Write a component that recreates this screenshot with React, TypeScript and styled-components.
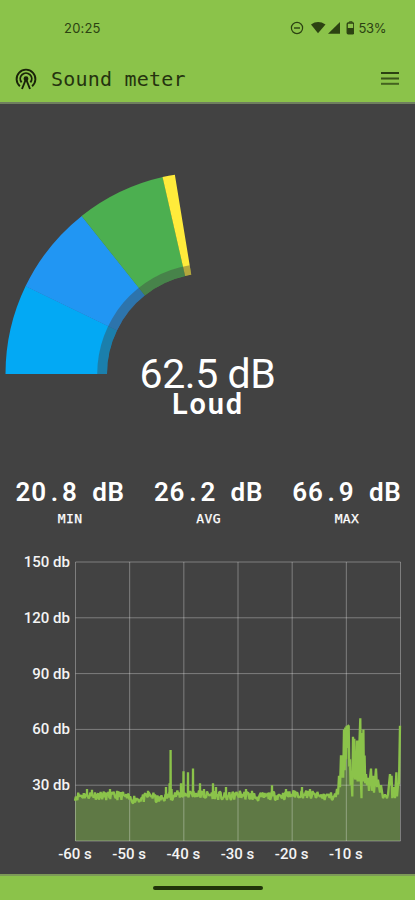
import React from "react";
import styled, { createGlobalStyle } from "styled-components";

const GREEN = "#8bc34a";
const PANEL = "#424242";
const INK = "#2c4212";

const GlobalStyle = createGlobalStyle`
  * { box-sizing: border-box; }
  body { margin: 0; background: ${PANEL}; font-family: Roboto, sans-serif; }
`;

const Screen = styled.div`
  width: 415px;
  height: 900px;
  display: flex;
  flex-direction: column;
  background: ${PANEL};
  color: #fff;
  overflow: hidden;
`;

const Header = styled.header`
  height: 104px;
  flex: none;
  background: ${GREEN};
  border-bottom: 2px solid #6f7f5f;
  color: ${INK};
`;

const StatusBar = styled.div`
  height: 55px;
  padding: 0 29px 0 64px;
  display: flex;
  align-items: center;
  justify-content: space-between;
  font: 400 13px Inter, sans-serif;
  letter-spacing: 0.2px;
`;

const StatusIcons = styled.div`
  display: flex;
  align-items: center;
`;

const Percent = styled.span`
  margin-left: 5px;
  letter-spacing: -0.4px;
`;

const AppBar = styled.div`
  height: 47px;
  padding: 0 15px 0 15px;
  display: flex;
  align-items: center;
`;

const AppTitle = styled.h1`
  margin: 0 0 0 14px;
  flex: 1;
  font: 400 20px "DejaVu Sans Mono", monospace;
  letter-spacing: 0.2px;
  color: #25330f;
`;

const Gauge = styled.section`
  height: 344px;
  flex: none;
  display: flex;
  flex-direction: column;
  align-items: center;
`;

const GaugeArc = styled.svg`
  display: block;
  flex: none;
`;

const Level = styled.div`
  margin-top: -24px;
  font-size: 41px;
  line-height: 48px;
  letter-spacing: -0.4px;
`;

const Loudness = styled.div`
  margin-top: -9px;
  padding-left: 1px;
  font: 600 29px/30px Roboto, sans-serif;
  letter-spacing: 1.9px;
`;

const Stats = styled.section`
  height: 98px;
  flex: none;
  padding: 29px 0 0 1px;
  display: grid;
  grid-template-columns: repeat(3, 138.4px);
`;

const Stat = styled.div`
  text-align: center;
  white-space: nowrap;
`;

const StatValue = styled.div`
  font: 600 26px/30px Roboto, sans-serif;
  letter-spacing: 0.8px;
  word-spacing: 7.2px;
`;

const DecimalPoint = styled.span`
  padding: 0 3px 0 4px;
`;

const StatLabel = styled.div`
  margin-top: 5px;
  font: 400 13px/14px "DejaVu Sans Mono", monospace;
  letter-spacing: 0.4px;
  -webkit-text-stroke: 0.25px #fff;
`;

const Chart = styled.svg`
  display: block;
  flex: none;
  font: 500 15px Roboto, sans-serif;
`;

const NavBar = styled.footer`
  height: 26px;
  flex: none;
  display: flex;
  justify-content: center;
  align-items: center;
  background: ${GREEN};
  border-top: 2px solid #7d9a58;
`;

const NavHandle = styled.div`
  width: 110px;
  height: 4px;
  border-radius: 2px;
  background: #20340a;
`;

const CX = 207.5;
const CY = 200;

function ring(from: number, to: number, inner: number, outer: number) {
  const at = (deg: number, r: number) => {
    const a = (deg * Math.PI) / 180;
    return `${(CX - r * Math.cos(a)).toFixed(2)} ${(CY - r * Math.sin(a)).toFixed(2)}`;
  };
  return `M${at(from, outer)}A${outer} ${outer} 0 0 1 ${at(to, outer)}L${at(to, inner)}A${inner} ${inner} 0 0 0 ${at(from, inner)}Z`;
}

const bands = [
  { from: 0, to: 25.8, color: "#03a9f4" },
  { from: 25.71, to: 51.5, color: "#2196f3" },
  { from: 51.43, to: 77.2, color: "#4caf50" },
  { from: 77.14, to: 80.7, color: "#ffeb3b" },
];

const stats = [
  { whole: "20", tenths: "8 dB", label: "MIN" },
  { whole: "26", tenths: "2 dB", label: "AVG" },
  { whole: "66", tenths: "9 dB", label: "MAX" },
];

/* Chart coordinates: one unit is one pixel. */
const LEFT = 75.5;
const RIGHT = 400.5;
const TOP = 14.5;
const BOTTOM = 293.5;
const ROW = (BOTTOM - TOP) / 5;
const COL = (RIGHT - LEFT) / 6;

const quiet: [number, number][] = [
  [75, 24], [88, 25], [100, 24.5], [112, 24], [122, 24.5], [130, 22.5], [145, 23],
  [150, 25], [158, 22], [167, 24], [180, 25], [195, 25.5], [205, 24.5], [214, 25],
  [226, 23.5], [240, 25], [260, 23.5], [272, 24.5], [285, 24.5], [300, 25.5], [320, 24], [336, 24],
];

const peaks: [number, number][] = [
  [87, 28], [92, 27.5], [110, 28], [117, 27], [148, 27], [166, 29], [169.6, 31], [170.6, 49], [171.6, 28],
  [181, 31], [183.5, 37.5], [188, 37], [193, 39], [200, 31], [204, 28], [213, 31],
  [216, 29], [226, 29], [246, 28], [252, 27], [261, 26], [272, 30], [286, 28], [295, 27], [302, 29], [310, 28],
];

const loud: [number, number][] = [
  [337, 28], [338, 25], [339, 35], [340, 29], [341, 46], [341.7, 34], [342.5, 46], [343.2, 34], [344, 60], [344.7, 38],
  [345.3, 61], [346, 44], [346.6, 62], [347.4, 50], [348, 62], [348.7, 62], [349.3, 40], [350, 44], [350.6, 30], [351.4, 34], [352.3, 24],
  [353, 56], [353.7, 34], [354.3, 55], [355, 33], [355.6, 45], [356.3, 33], [357, 54], [357.6, 32], [358.3, 54],
  [359, 32], [359.5, 54], [360.3, 66], [361, 31], [361.5, 23], [362, 58], [362.7, 32], [363.4, 60], [364, 32],
  [364.6, 46], [365.2, 31], [366, 36], [367, 30], [368, 34], [369, 27], [370, 34], [371, 39], [372, 27], [373, 35],
  [374, 26], [376, 39], [377, 29], [378, 33], [380, 26], [381, 30], [383, 23], [385, 25], [387, 23], [388, 25],
  [390, 36], [391, 30], [391.6, 35], [392.3, 23], [394, 29], [395, 23], [396.4, 37], [397, 24], [398, 30], [399, 31], [400, 62],
];

function interpolate(points: [number, number][], x: number) {
  const i = points.findIndex((p) => p[0] >= x);
  if (i <= 0) return points[Math.max(i, 0)][1];
  const [x0, y0] = points[i - 1];
  const [x1, y1] = points[i];
  return y0 + ((x - x0) / (x1 - x0)) * (y1 - y0);
}

function buildSamples() {
  const out: [number, number][] = [];
  let seed = 11;
  for (let x = 75; x < 336; x += 0.8) {
    seed = (seed * 16807) % 2147483647;
    out.push([x, interpolate(quiet, x) + (seed / 2147483647 - 0.5) * 4.8]);
  }
  peaks.forEach(([x, db]) => {
    out.push([x - 0.15, 24], [x, db], [x + 0.15, 24]);
  });
  out.sort((a, b) => a[0] - b[0]);
  return out.concat(loud);
}

const toY = (db: number) => BOTTOM - (db / 30) * ROW;
const trace = buildSamples().map(([x, db]) => `${x.toFixed(2)},${toY(db).toFixed(1)}`);
const area = [`75,${BOTTOM}`, ...trace, `400,${BOTTOM}`].join(" ");

function AntennaIcon() {
  return (
    <svg width="22" height="22" viewBox="0 0 22 22" fill="none" stroke="#192309" strokeWidth="1.9">
      <path d="M4.9 18.2A9.4 9.4 0 1 1 17.1 18.2" />
      <path d="M6.6 14.4A5.7 5.7 0 1 1 15.4 14.4" />
      <path d="M7 21L11 11L15 21" />
      <circle cx="11" cy="10.7" r="1.5" fill="#192309" />
    </svg>
  );
}

function MenuIcon() {
  return (
    <svg width="20" height="16" viewBox="0 0 20 16" fill={INK}>
      <rect x="1" y="1" width="18" height="2" />
      <rect x="1" y="6.5" width="18" height="2" fillOpacity="0.85" />
      <rect x="1" y="11.8" width="18" height="2" fillOpacity="0.75" />
    </svg>
  );
}

function SignalIcons() {
  return (
    <svg width="66" height="14" viewBox="0 0 66 14" fill="none">
      <circle cx="9" cy="7" r="5.6" stroke={INK} strokeWidth="1.2" />
      <path d="M6 7H12" stroke={INK} strokeWidth="1.4" />
      <path d="M23 3.5Q30 -1.3 37.5 3.5L30 12.2Z" fill={INK} />
      <path d="M40 12.8L52 1V12.8Z" fill={INK} />
      <path d="M61.3 1.5V0.8H64.2V1.5" stroke={INK} />
      <rect x="59.2" y="2" width="6.6" height="10.8" rx="1" stroke={INK} strokeWidth="1.3" />
      <rect x="59.2" y="7" width="6.6" height="6" fill={INK} />
    </svg>
  );
}

export default function App() {
  return (
    <>
      <GlobalStyle />
      <Screen>
        <Header>
          <StatusBar>
            <span>20:25</span>
            <StatusIcons>
              <SignalIcons />
              <Percent>53%</Percent>
            </StatusIcons>
          </StatusBar>
          <AppBar>
            <AntennaIcon />
            <AppTitle>Sound meter</AppTitle>
            <MenuIcon />
          </AppBar>
        </Header>

        <Gauge>
          <GaugeArc width="415" height="270" viewBox="0 -70 415 270">
            {bands.map((b) => (
              <path key={b.color} d={ring(b.from, b.to, 100.5, 202)} fill={b.color} />
            ))}
            <path d={ring(0, 80.7, 100.5, 110.3)} fill={PANEL} fillOpacity="0.4" />
          </GaugeArc>
          <Level>62.5 dB</Level>
          <Loudness>Loud</Loudness>
        </Gauge>

        <Stats>
          {stats.map((s) => (
            <Stat key={s.label}>
              <StatValue>
                {s.whole}
                <DecimalPoint>.</DecimalPoint>
                {s.tenths}
              </StatValue>
              <StatLabel>{s.label}</StatLabel>
            </Stat>
          ))}
        </Stats>

        <Chart width="415" height="328" viewBox="0 -1.5 415 328">
          <polygon points={area} fill="#5f7945" />
          <g stroke="#fff" strokeOpacity="0.32">
            {[0, 1, 2, 3, 4, 5].map((i) => (
              <path key={i} d={`M${LEFT} ${TOP + i * ROW}H${RIGHT}`} />
            ))}
            {[0, 1, 2, 3, 4, 5, 6].map((i) => (
              <path key={i} d={`M${LEFT + i * COL} ${TOP}V${BOTTOM}`} />
            ))}
          </g>
          <polyline points={trace.join(" ")} fill="none" stroke={GREEN} strokeWidth="2.3" strokeLinejoin="bevel" />
          <g fill="#f4f4f4" textAnchor="end">
            {[150, 120, 90, 60, 30].map((db, i) => (
              <text key={db} x="70" y={TOP + i * ROW + 5}>{`${db} db`}</text>
            ))}
          </g>
          <g fill="#f4f4f4" textAnchor="middle">
            {[60, 50, 40, 30, 20, 10].map((s, i) => (
              <text key={s} x={LEFT + i * COL - 0.5} y={BOTTOM + 18}>{`-${s} s`}</text>
            ))}
          </g>
        </Chart>

        <NavBar>
          <NavHandle />
        </NavBar>
      </Screen>
    </>
  );
}
